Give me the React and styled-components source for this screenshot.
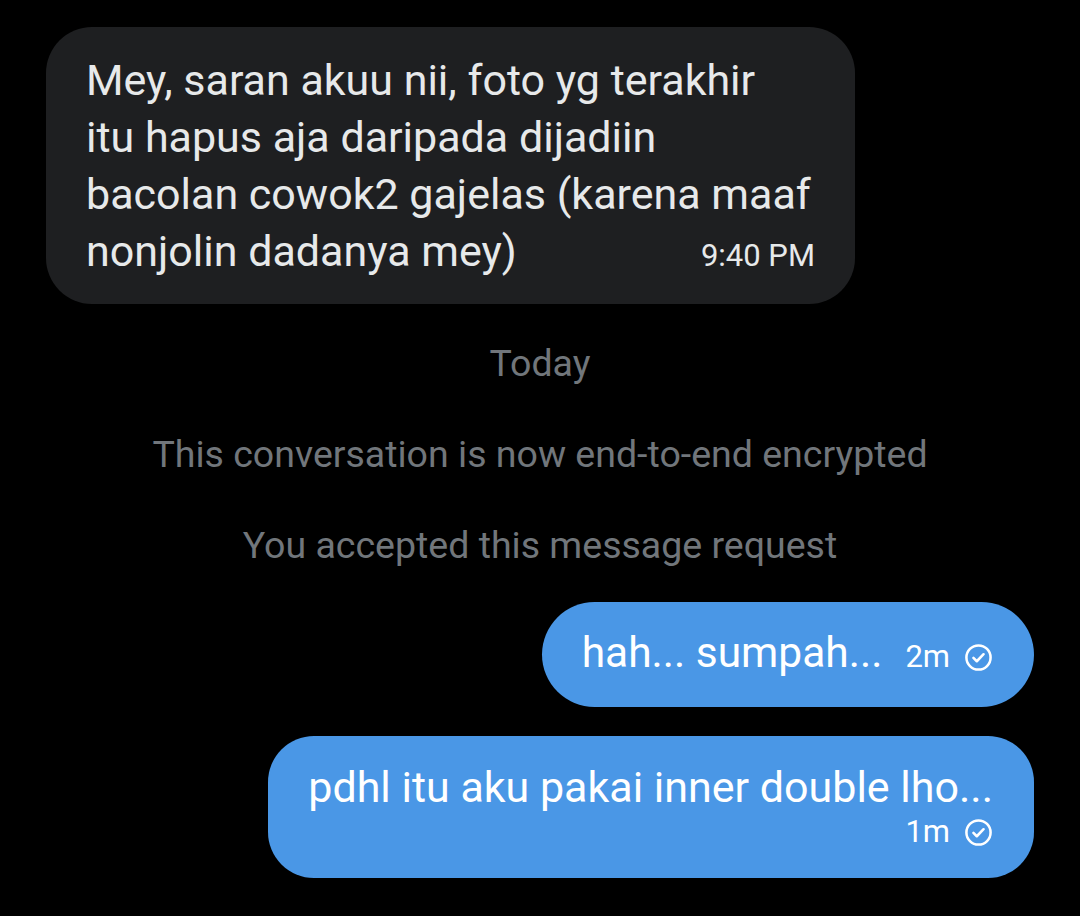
import React from "react";
import styled, { createGlobalStyle } from "styled-components";

const Global = createGlobalStyle`
  html, body { margin: 0; padding: 0; background: #000; }
  body { font-family: Roboto, "Noto Sans", "Liberation Sans", sans-serif; -webkit-font-smoothing: antialiased; }
`;

const Page = styled.div`
  width: 1080px;
  height: 916px;
  box-sizing: border-box;
  background: #000;
  padding: 27px 46px 0 46px;
  display: flex;
  flex-direction: column;
  overflow: hidden;
`;

const IncomingBubble = styled.div`
  align-self: flex-start;
  width: 809px;
  box-sizing: border-box;
  background: #1e1f21;
  border-radius: 46px;
  padding: 25px 40px 24px 40px;
  color: #e7e9ea;
  font-size: 43px;
  line-height: 57px;
`;

const Line = styled.div`
  white-space: nowrap;
`;

const LastRow = styled.div`
  display: flex;
  justify-content: space-between;
  align-items: baseline;
  white-space: nowrap;
`;

const Stamp = styled.span`
  font-size: 31px;
  line-height: 34px;
  color: ${(p) => p.$color || "#fff"};
  display: inline-flex;
  align-items: center;
  gap: 14px;
`;

const Notes = styled.div`
  margin-top: 39px;
  display: flex;
  flex-direction: column;
  align-items: center;
  gap: 51px;
`;

const Note = styled.div`
  color: #71767b;
  font-size: 37.5px;
  line-height: 40px;
  text-align: center;
  white-space: nowrap;
`;

const Outgoing = styled.div`
  display: flex;
  flex-direction: column;
  align-items: flex-end;
  gap: 29px;
  margin-top: 37px;
`;

const PillBubble = styled.div`
  background: #4a97e6;
  color: #fff;
  box-sizing: border-box;
  border-radius: 53px;
  height: 105px;
  display: flex;
  align-items: baseline;
  padding: 27px 41px 0 40px;
`;

const BlockBubble = styled.div`
  background: #4a97e6;
  color: #fff;
  box-sizing: border-box;
  border-radius: 46px;
  display: flex;
  flex-direction: column;
  align-items: flex-end;
  padding: 27px 41px 29px 40px;
`;

const OutText = styled.div`
  font-size: ${(p) => (p.$block ? "43px" : "42.5px")};
  line-height: 48px;
  white-space: nowrap;
  align-self: ${(p) => (p.$block ? "flex-start" : "auto")};
  margin-right: ${(p) => (p.$block ? "0" : "23px")};
`;

const StampRow = styled.div`
  margin-top: 4px;
  height: 34px;
  display: flex;
  align-items: center;
`;

const CheckCircle = () => (
  <svg width="29" height="29" viewBox="0 0 24 24" fill="none" style={{ alignSelf: "center" }}>
    <circle cx="12" cy="12" r="10" stroke="#fff" strokeWidth="2.1" />
    <path d="M7.8 12.3l2.8 2.8 5.6-5.8" stroke="#fff" strokeWidth="2.1" strokeLinecap="round" strokeLinejoin="round" />
  </svg>
);

export default function App() {
  return (
    <>
      <Global />
      <Page>
        <IncomingBubble>
          <Line>Mey, saran akuu nii, foto yg terakhir</Line>
          <Line>itu hapus aja daripada dijadiin</Line>
          <Line>bacolan cowok2 gajelas (karena maaf</Line>
          <LastRow>
            <span>nonjolin dadanya mey)</span>
            <Stamp $color="#e7e9ea">9:40 PM</Stamp>
          </LastRow>
        </IncomingBubble>

        <Notes>
          <Note>Today</Note>
          <Note>This conversation is now end-to-end encrypted</Note>
          <Note>You accepted this message request</Note>
        </Notes>

        <Outgoing>
          <PillBubble>
            <OutText>hah... sumpah...</OutText>
            <Stamp>
              2m <CheckCircle />
            </Stamp>
          </PillBubble>
          <BlockBubble>
            <OutText $block>pdhl itu aku pakai inner double lho...</OutText>
            <StampRow>
              <Stamp>
                1m <CheckCircle />
              </Stamp>
            </StampRow>
          </BlockBubble>
        </Outgoing>
      </Page>
    </>
  );
}
